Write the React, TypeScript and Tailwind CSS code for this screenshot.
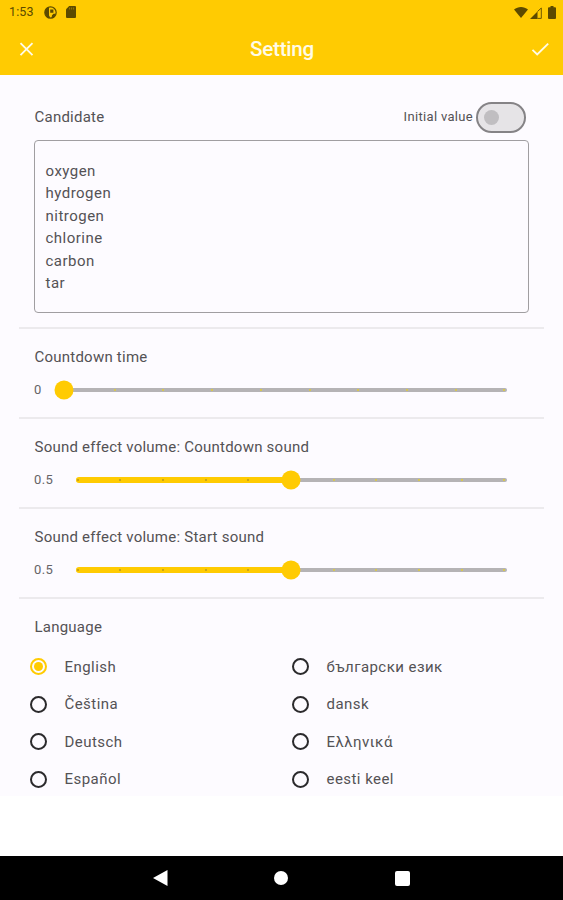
import { useState } from 'react';
import { clsx } from 'clsx';

const CANDIDATES = ['oxygen', 'hydrogen', 'nitrogen', 'chlorine', 'carbon', 'tar'];

const LANGUAGES = [
  'English',
  'български език',
  'Čeština',
  'dansk',
  'Deutsch',
  'Ελληνικά',
  'Español',
  'eesti keel',
];

function StatusBar() {
  return (
    <div className="flex h-6 items-center justify-between pl-[9px] pr-[7px] text-[#5c4a00]">
      <div className="flex items-center">
        <span className="w-[35px] text-[12.5px] leading-6 tracking-[0.1px]">1:53</span>
        <svg className="h-[13px] w-[13px]" viewBox="0 0 13 13">
          <circle cx="6.5" cy="6.5" r="5.7" fill="none" stroke="currentColor" strokeWidth="1.2" />
          <path d="M1 4.5 3.2 1.8 5 1v8.5L6.5 12 3 11 1 8Z" fill="currentColor" />
          <path d="M6.2 3.4h3.2v3.4H6.2ZM8 9.200l1.500-1.400H12L10 11.600 7.500 12.300Z" fill="currentColor" />
        </svg>
        <svg className="ml-[9px] h-3 w-[10px]" viewBox="0 0 10 12">
          <path d="M3.2 0H9a1 1 0 0 1 1 1v10a1 1 0 0 1-1 1H1a1 1 0 0 1-1-1V3.3Z" fill="currentColor" />
          <path d="M3.6 1.5v2M5.6 1.5v2M7.6 1.5v2" stroke="#a88800" strokeWidth=".8" />
        </svg>
      </div>
      <div className="flex items-center">
        <svg className="h-[11px] w-[14px]" viewBox="0 0 14 11">
          <path d="M7 11 0 2.6C4-.8 10-.8 14 2.6Z" fill="currentColor" />
        </svg>
        <svg className="ml-[2px] mt-[2px] h-[12px] w-[12px]" viewBox="0 0 12 12">
          <path d="M0 12 7.5 4.5V12Z" fill="currentColor" />
          <path d="M7.5 4.5 11.3 1v10.4H7.5" fill="none" stroke="currentColor" strokeWidth=".9" />
        </svg>
        <svg className="ml-[6px] h-[13px] w-2" viewBox="0 0 8 13">
          <path d="M2.5 0h3v1.3H7a1 1 0 0 1 1 1V12a1 1 0 0 1-1 1H1a1 1 0 0 1-1-1V2.3a1 1 0 0 1 1-1h1.5Z" fill="currentColor" />
        </svg>
      </div>
    </div>
  );
}

function Header() {
  return (
    <header className="h-[75px] bg-[#ffcb02]">
      <StatusBar />
      <div className="flex h-[50px] items-center justify-between pl-[17px] pr-[14px] text-[#fffbe8]">
        <svg className="h-[18px] w-[18px]" viewBox="0 0 18 18" fill="none" stroke="currentColor" strokeWidth="1.9">
          <path d="M3.500 3.200 15.500 15.200M15.500 3.200 3.500 15.200" />
        </svg>
        <h1 className="pr-[2px] text-[20.6px] font-medium tracking-[-0.25px]">Setting</h1>
        <svg className="h-[18px] w-[18px]" viewBox="0 0 18 18" fill="none" stroke="currentColor" strokeWidth="1.9">
          <path d="M1.500 9.900 6.200 14.400 17.200 3.600" />
        </svg>
      </div>
    </header>
  );
}

type SliderProps = {
  value: number;
  max: number;
  divisions: number;
  wide?: boolean;
};

function Slider({ value, max, divisions, wide }: SliderProps) {
  const percent = (value / max) * 100;
  const ticks = Array.from({ length: divisions + 1 }, (_, i) => i);

  return (
    <div className="flex h-[30px] items-center pl-[15px] pr-[37.5px]">
      <span className={clsx('shrink-0 text-[13px] tracking-[0.35px] text-[#666467]', wide ? 'w-[30px]' : 'w-[41.5px]')}>
        {value}
      </span>
      <div className="relative h-1 flex-1 rounded-full bg-[#b5b3b5]">
        <div className="absolute -top-px left-0 h-1.5 rounded-full bg-[#ffcb02]" style={{ width: `${percent}%` }} />
        <div className="absolute inset-x-px top-px flex justify-between">
          {ticks.map((i) => (
            <span
              key={i}
              className={clsx('size-[2px] rounded-full', i / divisions < value / max ? 'bg-[#b8981c]' : 'bg-[#e2cc34]')}
            />
          ))}
        </div>
        <div
          className="absolute top-1/2 size-[19px] -translate-x-1/2 -translate-y-1/2 rounded-full bg-[#ffcb02]"
          style={{ left: `${percent}%` }}
        />
      </div>
    </div>
  );
}

function SliderSection({ title, ...slider }: SliderProps & { title: string }) {
  return (
    <section className="h-[90px] border-b-2 border-[#eceaed] pt-[17px]">
      <h2 className="pl-[15.5px] text-[15px] leading-[22px] tracking-[0.23px]">{title}</h2>
      <div className="pt-[7px]">
        <Slider {...slider} />
      </div>
    </section>
  );
}

export default function App() {
  const [language, setLanguage] = useState('English');
  const [initial, setInitial] = useState(false);

  return (
    <div className="flex h-[900px] w-[563px] flex-col bg-white font-[Roboto,sans-serif] text-[#545255]">
      <Header />

      <main className="h-[721px] bg-[#fdfbff] px-[19px]">
        {/* Candidate */}
        <section className="h-[254px] border-b-2 border-[#eceaed] px-[15px] pt-[26px]">
          <div className="flex h-8 items-center justify-between pr-[3px]">
            <h2 className="pl-[0.5px] text-[15px] tracking-[0.23px]">Candidate</h2>
            <div className="flex items-center gap-[3px]">
              <span className="text-[13px] tracking-[0.32px]">Initial value</span>
              <button
                onClick={() => setInitial(!initial)}
                className={clsx(
                  'flex h-[31px] w-[50px] items-center rounded-full border-2 border-[#858386] bg-[#e6e4e7] px-[6px]',
                  initial && 'justify-end',
                )}
              >
                <span className="size-[15px] rounded-full bg-[#c0bec1]" />
              </button>
            </div>
          </div>
          <ul className="mt-[7px] h-[173px] w-[495px] rounded-[4px] border border-[#a09ea1] pl-[10.5px] pt-[18.5px] text-[15px] leading-[22.5px] tracking-[0.48px]">
            {CANDIDATES.map((name) => (
              <li key={name}>{name}</li>
            ))}
          </ul>
        </section>

        <SliderSection title="Countdown time" value={0} max={9} divisions={9} wide />
        <SliderSection title="Sound effect volume: Countdown sound" value={0.5} max={1} divisions={10} />
        <SliderSection title="Sound effect volume: Start sound" value={0.5} max={1} divisions={10} />

        {/* Language */}
        <section className="pt-[17px]">
          <h2 className="pl-[15.5px] text-[15px] leading-[22px] tracking-[0.23px]">Language</h2>
          <div className="grid grid-cols-[262px_262px] pt-[10px]">
            {LANGUAGES.map((name) => (
              <button key={name} onClick={() => setLanguage(name)} className="flex h-[37.5px] items-center pl-[10.5px] text-left">
                <span
                  className={clsx(
                    'flex size-[17px] items-center justify-center rounded-full border-2',
                    name === language ? 'border-[#ffcb02]' : 'border-[#2b2a2c]',
                  )}
                >
                  {name === language && <span className="size-[9px] rounded-full bg-[#ffcb02]" />}
                </span>
                <span className="pl-[18px] text-[15px] tracking-[0.45px]">{name}</span>
              </button>
            ))}
          </div>
        </section>
      </main>

      {/* Android navigation */}
      <nav className="mt-auto flex h-11 items-center justify-between bg-black pl-[153px] pr-[153.5px] text-white">
        <svg className="h-4 w-[15px]" viewBox="0 0 15 16" fill="currentColor">
          <path d="M0 8 14.5 0v16Z" />
        </svg>
        <span className="size-[14px] rounded-full bg-white" />
        <span className="size-[15px] rounded-[2px] bg-white" />
      </nav>
    </div>
  );
}
